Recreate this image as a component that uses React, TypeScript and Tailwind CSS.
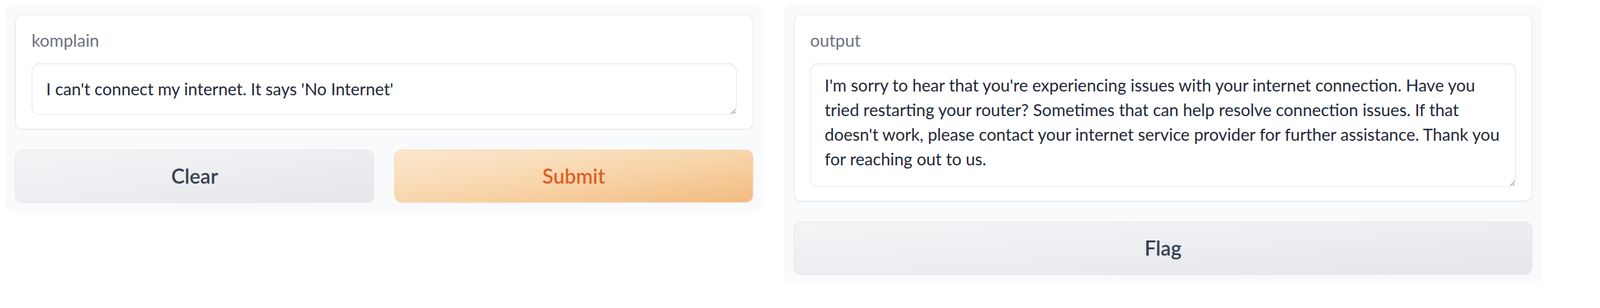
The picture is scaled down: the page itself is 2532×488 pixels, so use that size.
const komplain = "I can't connect my internet. It says 'No Internet'";

const output = [
  "I'm sorry to hear that you're experiencing issues with your internet connection. Have you",
  "tried restarting your router? Sometimes that can help resolve connection issues. If that",
  "doesn't work, please contact your internet service provider for further assistance. Thank you",
  "for reaching out to us.",
].join("\n");

function Field({
  label,
  value,
  boxClass,
}: {
  label: string;
  value: string;
  boxClass: string;
}) {
  return (
    <div className="rounded-[12px] border border-[#e5e7eb] bg-white px-[25px] pt-[20px] pb-[22px] shadow-[0_1px_2px_0_rgba(0,0,0,0.05)]">
      <div className="h-[40px] text-[27px] leading-[40px] text-[#6b7280]">
        {label}
      </div>
      <textarea
        readOnly
        wrap="off"
        value={value}
        className={`mt-[16px] block w-full overflow-hidden rounded-[12px] border border-[#e5e7eb] bg-white px-[22px] text-[26.6px] leading-[39px] text-[#1f2937] shadow-[inset_0_2px_4px_0_rgba(0,0,0,0.05)] outline-none ${boxClass}`}
      />
    </div>
  );
}

const btn =
  "h-[84px] rounded-[12px] border text-[32px] font-semibold shadow-[0_1px_2px_0_rgba(0,0,0,0.05)]";

export default function App() {
  return (
    <div className="flex h-[488px] w-[2532px] items-start gap-[32px] bg-white pt-[7px] pl-[8px] font-['Lato',sans-serif]">
      <div className="flex w-[1200px] flex-col gap-[32px] rounded-[14px] bg-[#f9fafb] p-[16px]">
        <Field label="komplain" value={komplain} boxClass="h-[82px] pt-[21px]" />
        <div className="grid grid-cols-2 gap-[32px]">
          <button
            type="button"
            className={`${btn} border-[#e5e7eb] bg-linear-to-br from-[#f3f4f6] to-[#e5e7eb] text-[#374151]`}
          >
            Clear
          </button>
          <button
            type="button"
            className={`${btn} border-[#f8d6ab] bg-linear-to-br from-[#fce8d0] via-[#f8d6ac] to-[#f2bb80] text-[#dd602a]`}
          >
            Submit
          </button>
        </div>
      </div>

      <div className="flex w-[1201px] flex-col gap-[32px] rounded-[14px] bg-[#f9fafb] p-[16px] pb-[13px]">
        <Field label="output" value={output} boxClass="h-[196px] pt-[15px]" />
        <button
          type="button"
          className={`${btn} border-[#e5e7eb] bg-linear-to-br from-[#f3f4f6] to-[#e5e7eb] text-[#374151]`}
        >
          Flag
        </button>
      </div>
    </div>
  );
}
